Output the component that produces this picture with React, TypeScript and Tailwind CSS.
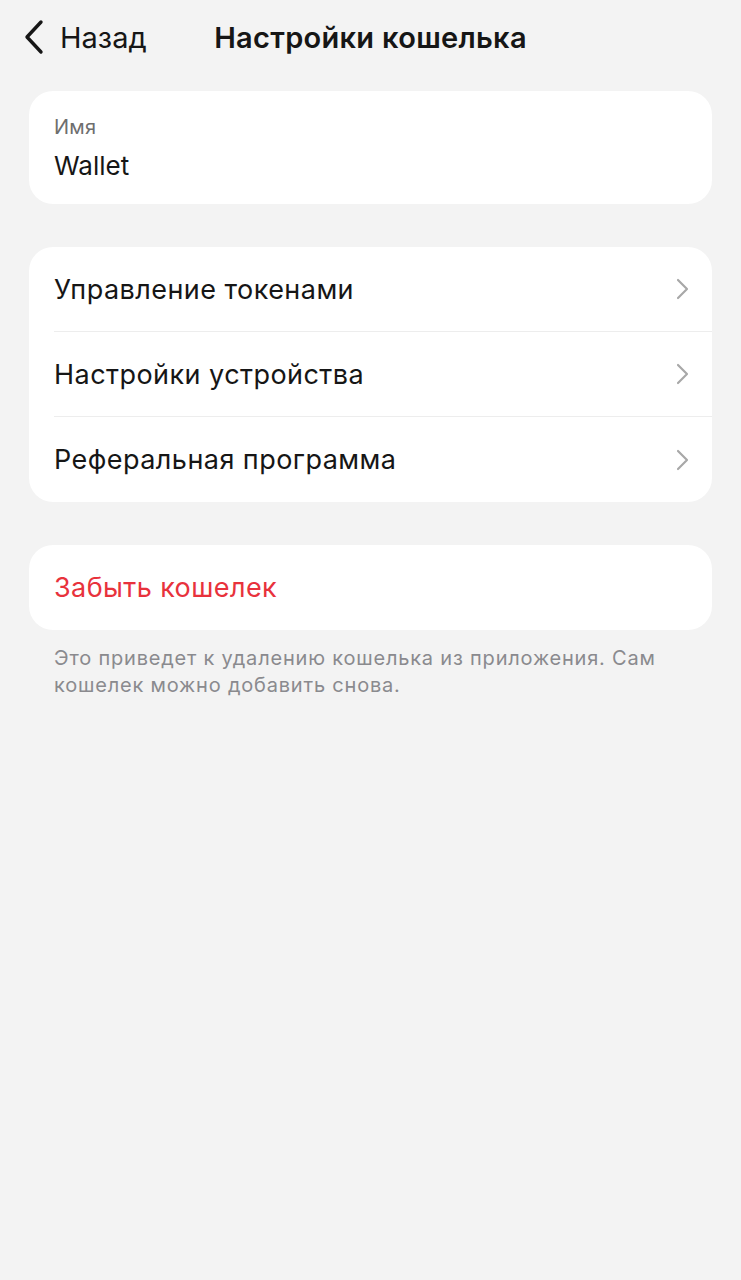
import React from 'react';

const rows = ['Управление токенами', 'Настройки устройства', 'Реферальная программа'];

function ChevronRight() {
  return (
    <svg width="14" height="22" viewBox="0 0 14 22" fill="none" className="shrink-0">
      <path d="M3 2l9 9-9 9" stroke="#a8a8a8" strokeWidth="2.2" strokeLinecap="round" strokeLinejoin="round" />
    </svg>
  );
}

export default function App() {
  return (
    <div
      className="min-h-[1280px] w-full bg-[#f3f3f3] text-[#161616]"
      style={{ fontFamily: 'Inter, "Noto Sans", sans-serif' }}
    >
      {/* Header */}
      <div className="grid h-[74px] grid-cols-[1fr_auto_1fr] items-center px-[22px]">
        <button className="flex items-center gap-[14px] justify-self-start">
          <svg width="24" height="36" viewBox="0 0 24 36" fill="none">
            <path d="M19 3L5 18l14 15" stroke="#161616" strokeWidth="3.4" strokeLinecap="round" strokeLinejoin="round" />
          </svg>
          <span className="text-[29px] leading-none">Назад</span>
        </button>
        <h1 className="text-[29px] font-semibold leading-none tracking-[0.3px]">Настройки кошелька</h1>
        <div />
      </div>

      <div className="flex flex-col px-[29px] pt-[17px]">
        {/* Name */}
        <div className="flex h-[113px] flex-col justify-center rounded-[24px] bg-white px-[25px]">
          <div className="text-[20px] leading-[24px] tracking-[0.3px] text-[#6e6e6e]">Имя</div>
          <div className="mt-[12px] text-[26px] leading-[30px]">Wallet</div>
        </div>

        {/* Menu */}
        <div className="mt-[43px] overflow-hidden rounded-[24px] bg-white">
          {rows.map((label, i) => (
            <div key={label} className="pl-[25px]">
              <div
                className={
                  'flex h-[85px] items-center justify-between pr-[23px] ' +
                  (i < rows.length - 1 ? 'border-b border-[#ededed]' : '')
                }
              >
                <span className="text-[27px] leading-none tracking-[0.45px]">{label}</span>
                <ChevronRight />
              </div>
            </div>
          ))}
        </div>

        {/* Forget */}
        <div className="mt-[43px] flex h-[85px] items-center rounded-[24px] bg-white px-[25px]">
          <span className="text-[27px] leading-none tracking-[0.4px] text-[#e8323c]">Забыть кошелек</span>
        </div>
        <p className="mt-[15px] px-[25px] text-[20px] leading-[27px] tracking-[0.8px] text-[#8a8a8e]">
          Это приведет к удалению кошелька из приложения. Сам кошелек можно добавить снова.
        </p>
      </div>
    </div>
  );
}
